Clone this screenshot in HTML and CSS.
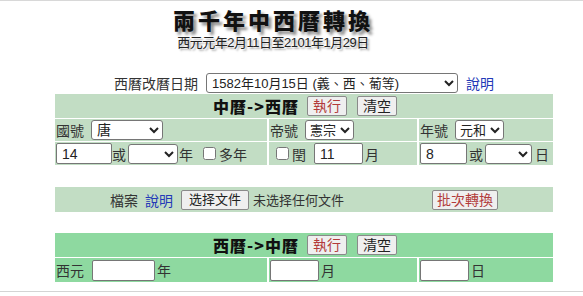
FILE: index.html
```html
<!DOCTYPE html>
<html lang="zh-Hant">
<head>
    <meta charset="UTF-8">
    <title>兩千年中西曆轉換</title>
    <link rel="stylesheet" href="styles.css">
</head>
<body>

    <!-- Title -->
    <div class="masthead">
        <h1>兩千年中西曆轉換</h1>
        <p>西元元年2月11日至2101年1月29日</p>
    </div>

    <!-- Calendar reform date -->
    <div class="reform">
        <span>西曆改曆日期</span>
        <select class="sel-reform">
            <option>1582年10月15日 (義、西、葡等)</option>
        </select>
        <a href="#" class="help">說明</a>
    </div>

    <!-- Chinese -> Western -->
    <div class="panel light">
        <div class="panel-head">
            <span class="panel-title">中曆-&gt;西曆</span>
            <button class="btn run">執行</button>
            <button class="btn clear">清空</button>
        </div>
        <div class="cell">
            <span class="lbl">國號</span>
            <select class="sel-dynasty"><option>唐</option></select>
        </div>
        <div class="cell">
            <span class="lbl">帝號</span>
            <select class="sel-small"><option>憲宗</option></select>
        </div>
        <div class="cell">
            <span class="lbl">年號</span>
            <select class="sel-small"><option>元和</option></select>
        </div>
        <div class="cell">
            <input type="text" class="num w56" value="14">
            <span>或</span>
            <select class="sel-blank w50"><option></option></select>
            <span>年</span>
            <input type="checkbox" class="chk first">
            <span>多年</span>
        </div>
        <div class="cell">
            <input type="checkbox" class="chk leap">
            <span>閏</span>
            <input type="text" class="num w49 gap8" value="11">
            <span class="after">月</span>
        </div>
        <div class="cell">
            <input type="text" class="num w47" value="8">
            <span class="after">或</span>
            <select class="sel-blank w47"><option></option></select>
            <span class="after">日</span>
        </div>
    </div>

    <!-- Batch file -->
    <div class="batch light">
        <div class="batch-file">
            <span>檔案</span>
            <a href="#" class="help">說明</a>
            <button class="btn pick">选择文件</button>
            <span class="nofile">未选择任何文件</span>
        </div>
        <div class="batch-go">
            <button class="btn run wide">批次轉換</button>
        </div>
    </div>

    <!-- Western -> Chinese -->
    <div class="panel dark">
        <div class="panel-head">
            <span class="panel-title">西曆-&gt;中曆</span>
            <button class="btn run">執行</button>
            <button class="btn clear">清空</button>
        </div>
        <div class="cell tall">
            <span class="lbl">西元</span>
            <input type="text" class="num w63">
            <span class="after">年</span>
        </div>
        <div class="cell tall">
            <input type="text" class="num w49">
            <span class="after">月</span>
        </div>
        <div class="cell tall">
            <input type="text" class="num w49">
            <span class="after">日</span>
        </div>
    </div>

    <hr class="rule">

</body>
</html>
```

FILE: styles.css
```css
/* General styles */
body {
    margin: 0;
    border-top: 1px solid #d8d8d8;
    background-color: #fff;
    color: #333;
    font-family: "Liberation Sans", "Noto Sans CJK TC", sans-serif;
    font-size: 14px;
}

/* Title block */
.masthead {
    width: 546px;
    padding-top: 4px;
    text-align: center;
}

.masthead h1 {
    margin: 0;
    font-family: "Noto Sans CJK TC", sans-serif;
    font-size: 22px;
    line-height: 28px;
    font-weight: 900;
    letter-spacing: 3px;
    color: #111;
    text-shadow: 3px 3px 3px #8a8a8a;
}

.masthead p {
    margin: 2px 0 0;
    font-size: 13px;
    line-height: 16px;
    letter-spacing: -0.5px;
    color: #222;
    text-shadow: 2px 2px 2px #aaa;
}

/* Reform date row */
.reform {
    width: 498px;
    margin: 22px 0 0 55px;
    height: 20px;
    display: flex;
    align-items: center;
    justify-content: center;
    gap: 8px;
}

.help {
    color: #2339b8;
    text-decoration: none;
}

/* Form controls */
select, input[type="text"], .btn {
    box-sizing: border-box;
    font-family: "Liberation Sans", "Noto Sans CJK TC", sans-serif;
    font-size: 14px;
    color: #222;
}

select {
    height: 20px;
    padding: 0 1px;
    border: 1px solid #767676;
    border-radius: 3px;
    background-color: #fff;
}

.sel-reform { width: 252px; font-size: 13px; }
.sel-dynasty { width: 72px; margin-left: 7px; }
.sel-small { width: 49px; margin-left: 7px; font-size: 13px; padding: 0; }
.sel-blank { margin: 0 1px 0 2px; }

input[type="text"] {
    height: 21px;
    padding: 1px 5px;
    border: 1px solid #767676;
    border-radius: 2px;
    background-color: #fff;
}

.w47 { width: 47px; }
.w49 { width: 49px; }
.w50 { width: 50px; }
.w56 { width: 56px; }
.w63 { width: 63px; margin-left: 8px; }
.gap8 { margin-left: 8px; }
.after { margin-left: 2px; }

.chk {
    width: 13px;
    height: 13px;
    margin: 0 3px 0 0;
}

.chk.first { margin-left: 10px; }
.chk.leap { margin-left: 6px; }

.btn {
    height: 20px;
    padding: 0;
    border: 1px solid #8a8a8a;
    border-radius: 2px;
    background-color: #efefef;
    font-size: 14px;
    line-height: 16px;
    white-space: nowrap;
}

.btn.run { color: #b23a3a; width: 40px; margin-left: 8px; }
.btn.clear { width: 40px; margin-left: 10px; }
.btn.wide { width: 66px; margin-left: 13px; }
.btn.pick { width: 68px; margin-left: 1px; font-size: 13px; }

/* Panels */
.light .cell, .light .panel-head, .batch.light { background-color: #c2ddc4; }
.dark .cell, .dark .panel-head { background-color: #8ed9a0; }

.panel {
    width: 498px;
    margin: 1px 0 0 55px;
    display: grid;
    grid-template-columns: 212px 148px 134px;
    column-gap: 2px;
    row-gap: 1px;
}

.panel-head {
    grid-column: 1 / 4;
    height: 24px;
    display: flex;
    align-items: center;
    justify-content: center;
    padding-left: 2px;
}

.panel-title {
    font-family: "Noto Sans CJK TC", sans-serif;
    font-size: 16px;
    font-weight: 900;
    letter-spacing: 1px;
    color: #111;
}

.cell {
    height: 22px;
    display: flex;
    align-items: center;
    padding-left: 1px;
    white-space: nowrap;
}

.cell:nth-child(n+5) { height: 23px; }

.cell.tall { height: 24px; }

/* Batch row */
.batch {
    width: 498px;
    height: 25px;
    margin: 22px 0 0 55px;
    display: flex;
    align-items: center;
}

.batch-file {
    width: 364px;
    padding-left: 55px;
    box-sizing: border-box;
    display: flex;
    align-items: center;
    gap: 7px;
}

.nofile {
    margin-left: -3px;
    font-size: 13px;
}

.batch + .panel { margin-top: 21px; }

.rule {
    border: 0;
    border-top: 1px solid #d4d4d4;
    margin: 9px 0 0;
}
```
